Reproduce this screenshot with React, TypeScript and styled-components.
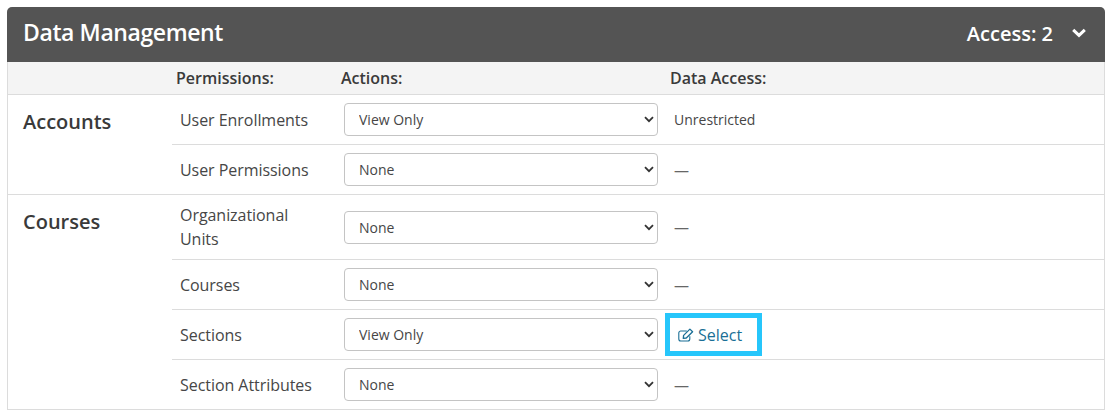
import React from "react";
import styled, { createGlobalStyle } from "styled-components";

const GlobalStyle = createGlobalStyle`
  html, body {
    margin: 0;
    padding: 0;
    background: #fff;
    font-family: "Open Sans", "Liberation Sans", sans-serif;
    color: #3d3d3d;
  }
`;

const Page = styled.div`
  padding: 7px 8px 7px 7px;
`;

const Card = styled.section`
  border: 1px solid #dcdcdc;
  border-top: 0;
  border-radius: 5px 5px 0 0;
`;

const Header = styled.header`
  display: flex;
  align-items: center;
  justify-content: space-between;
  height: 55px;
  margin: 0 -1px;
  padding: 0 19px 0 16px;
  background: #545454;
  border-radius: 5px 5px 0 0;
  color: #fff;
`;

const Title = styled.h2`
  margin: 0 0 5px;
  font-size: 23px;
  font-weight: 600;
  letter-spacing: -0.4px;
`;

const Access = styled.div`
  display: flex;
  align-items: center;
  gap: 19px;
  font-size: 20px;
  font-weight: 600;
  margin-bottom: 3px;
`;

const Grid = styled.div`
  display: grid;
  grid-template-columns: 164px 1fr;
`;

const ColumnHeads = styled.div`
  display: grid;
  grid-template-columns: 164px 165px 329px 1fr;
  align-items: center;
  height: 32px;
  background: #f4f4f4;
  border-bottom: 1px solid #dcdcdc;
  font-size: 16px;
  font-weight: 600;
  color: #3a3a3a;
`;

const Head = styled.span`
  padding-left: 4px;
`;

const Section = styled(Grid)`
  border-bottom: 1px solid #dcdcdc;
  &:last-child {
    border-bottom: 0;
  }
`;

const Category = styled.h3`
  margin: 0;
  padding: 13px 0 0 15px;
  font-size: 20px;
  font-weight: 600;
  line-height: 27px;
  color: #3a3a3a;
`;

const Row = styled.div<{ $tall?: boolean }>`
  display: grid;
  grid-template-columns: 172px 326px 1fr;
  align-items: center;
  height: ${(p) => (p.$tall ? 64 : 49)}px;
  border-bottom: 1px solid #dcdcdc;
  &:last-child {
    border-bottom: 0;
  }
`;

const Name = styled.span`
  padding-left: 8px;
  font-size: 16px;
  line-height: 24px;
  letter-spacing: -0.05px;
  color: #464646;
`;

const SelectWrap = styled.div`
  position: relative;
  width: 314px;
`;

const Select = styled.select`
  display: block;
  width: 100%;
  height: 33px;
  padding: 0 28px 0 14px;
  appearance: none;
  background: #fff;
  border: 1px solid #c4c4c4;
  border-radius: 4px;
  font-family: inherit;
  font-size: 14px;
  color: #464646;
`;

const Caret = styled.svg`
  position: absolute;
  top: 13px;
  right: 4px;
  width: 10px;
  height: 7px;
  pointer-events: none;
`;

const Value = styled.span`
  padding-left: 4px;
  font-size: 14px;
  color: #464646;
`;

const Dash = styled(Value)`
  font-size: 15px;
  color: #666;
`;

const SelectLink = styled.a`
  display: inline-flex;
  align-items: center;
  gap: 4px;
  justify-self: start;
  box-sizing: border-box;
  width: 97px;
  height: 43px;
  margin-left: -5px;
  padding: 0 0 0 8px;
  border: 5px solid #26c6fb;
  color: #1a6f96;
  font-size: 16px;
  text-decoration: none;
`;

const Chevron = () => (
  <svg width="14" height="10" viewBox="0 0 14 10" aria-hidden="true">
    <path d="M1.2 1.8 7 7.4l5.8-5.6" fill="none" stroke="#fff" strokeWidth="3" />
  </svg>
);

const EditIcon = () => (
  <svg width="16" height="14" viewBox="0 0 16 14" aria-hidden="true">
    <path
      d="M11.8 8.2v2.8a2 2 0 0 1-2 2H2.8a2 2 0 0 1-2-2V5a2 2 0 0 1 2-2h6"
      fill="none"
      stroke="#1a6f96"
      strokeWidth="1.1"
    />
    <path
      d="M5.6 7.4 11.9 1.1l2.7 2.6-6.3 6.3-3 .4z"
      fill="none"
      stroke="#1a6f96"
      strokeWidth="1.3"
      strokeLinejoin="round"
    />
  </svg>
);

interface Permission {
  name: string;
  action: string;
  access?: string;
  link?: boolean;
  tall?: boolean;
}

const groups: { title: string; rows: Permission[] }[] = [
  {
    title: "Accounts",
    rows: [
      { name: "User Enrollments", action: "View Only", access: "Unrestricted" },
      { name: "User Permissions", action: "None" },
    ],
  },
  {
    title: "Courses",
    rows: [
      { name: "Organizational Units", action: "None", tall: true },
      { name: "Courses", action: "None" },
      { name: "Sections", action: "View Only", link: true },
      { name: "Section Attributes", action: "None" },
    ],
  },
];

const Wrapped = styled(Name)`
  max-width: 130px;
`;

export default function App() {
  return (
    <Page>
      <GlobalStyle />
      <Card>
        <Header>
          <Title>Data Management</Title>
          <Access>
            <span>Access: 2</span>
            <Chevron />
          </Access>
        </Header>
        <ColumnHeads>
          <span />
          <Head>Permissions:</Head>
          <Head>Actions:</Head>
          <Head>Data Access:</Head>
        </ColumnHeads>
        {groups.map((group) => (
          <Section key={group.title}>
            <Category>{group.title}</Category>
            <div>
              {group.rows.map((row) => (
                <Row key={row.name} $tall={row.tall}>
                  {row.tall ? <Wrapped>{row.name}</Wrapped> : <Name>{row.name}</Name>}
                  <SelectWrap>
                    <Select defaultValue={row.action}>
                      <option>None</option>
                      <option>View Only</option>
                    </Select>
                    <Caret viewBox="0 0 10 7" aria-hidden="true">
                      <path d="M1 1.2 5 5.2l4-4" fill="none" stroke="#333" strokeWidth="1.8" />
                    </Caret>
                  </SelectWrap>
                  {row.link ? (
                    <SelectLink href="#">
                      <EditIcon />
                      Select
                    </SelectLink>
                  ) : row.access ? (
                    <Value>{row.access}</Value>
                  ) : (
                    <Dash>—</Dash>
                  )}
                </Row>
              ))}
            </div>
          </Section>
        ))}
      </Card>
    </Page>
  );
}
